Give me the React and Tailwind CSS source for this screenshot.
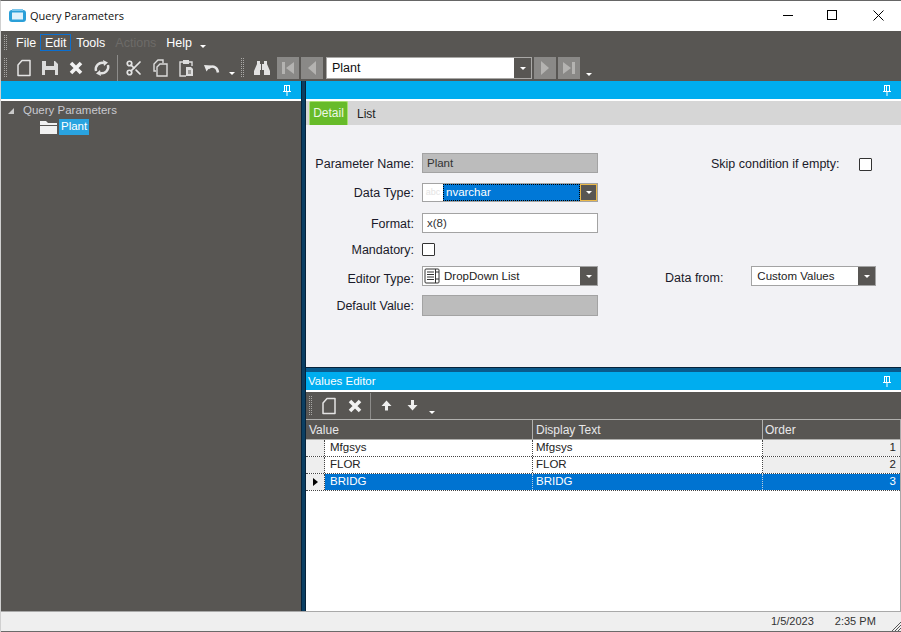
import { Scissors } from "lucide-react";

const Caret = ({ className = "" }) => (
    <span className={`block w-0 h-0 border-x-[3px] border-x-transparent border-t-[3px] border-t-white ${className}`} />
);

const Grip = ({ className = "" }) => (
    <span className={`block w-[3px] border-x border-dotted border-[#a9a8a6] ${className}`} />
);

const Pin = () => (
    <svg width="10" height="11" viewBox="0 0 10 11" className="block">
        <path d="M2 0h6v6H9v1H5.500v4h-1V7H1V6h1zM3 1v5h1V1zM5 1v5h2V1z" fill="#fff" />
    </svg>
);

const Icon = ({ children, w = 18 }) => (
    <svg width={w} height="18" viewBox="0 0 18 18" fill="none" className="block">
        {children}
    </svg>
);

const NewIcon = () => (
    <Icon>
        <path d="M7 1.500h8v15H3V6z" stroke="#e4e4e4" strokeWidth="1.500" strokeLinejoin="round" />
    </Icon>
);

const SaveIcon = () => (
    <Icon>
        <path fillRule="evenodd" d="M1 2h13l3 3v11H1zM5 2v5h8V2zM4 11v5h10v-5z" fill="#dcdcdc" />
    </Icon>
);

const CloseIcon = () => (
    <Icon>
        <path d="M4 4l10 10M14 4L4 14" stroke="#f2f2f2" strokeWidth="3.600" />
    </Icon>
);

const RefreshIcon = () => (
    <Icon>
        <path d="M3 12a6.500 6.500 0 0 1 8-8" stroke="#e2e2e2" strokeWidth="2.400" />
        <path d="M15 6a6.500 6.500 0 0 1-8 8" stroke="#e2e2e2" strokeWidth="2.400" />
        <path d="M10 1l5 2.500-4 3.500zM8 17l-5-2.500 4-3.500z" fill="#e2e2e2" />
    </Icon>
);

const CopyIcon = () => (
    <Icon>
        <path d="M5 12H3V5l4-4h5v3" stroke="#dcdcdc" strokeWidth="1.400" />
        <path d="M9 5h7v12H6V8z" stroke="#dcdcdc" strokeWidth="1.400" />
    </Icon>
);

const PasteIcon = () => (
    <Icon>
        <path d="M6 3H3v14h6M12 3h3v4" stroke="#dcdcdc" strokeWidth="1.400" />
        <path d="M6 1h6v4H6z" fill="#dcdcdc" />
        <path d="M9 8h5l2 2v7H9z" fill="#dcdcdc" />
        <path d="M11 12h3M11 14h3" stroke="#585653" />
    </Icon>
);

const UndoIcon = () => (
    <Icon>
        <path d="M5 9.500c3-3.500 9-2.500 10 4" stroke="#e6e6e6" strokeWidth="2.600" />
        <path d="M1 6l7 0.500-4.500 6z" fill="#e6e6e6" />
    </Icon>
);

const BinocularsIcon = () => (
    <Icon>
        <path d="M4 2h3v3h4V2h3v3l3 7v4h-6v-5H7v5H1v-4l3-7z" fill="#e2e2e2" />
        <path d="M8.500 5v6" stroke="#585653" />
    </Icon>
);

const ArrowUp = ({ down }) => (
    <svg width="11" height="11" viewBox="0 0 11 11" className="block">
        <path d={down ? "M4 0h3v5h3.500L5.500 10.500.5 5H4z" : "M5.500.5L10.500 6H7v4.500H4V6H.5z"} fill="#efefef" />
    </svg>
);

const NavButton = ({ dir, bar, className = "" }) => (
    <span className={`w-[22px] h-[22px] bg-[#8a8987] flex items-center justify-center ${className}`}>
        <svg width="14" height="14" viewBox="0 0 14 14" className="block">
            {dir === "left" ? (
                <path d={bar ? "M1 1h3v12H1zM13 1v12L5 7z" : "M11 0v14L3 7z"} fill="#b4b3b1" />
            ) : (
                <path d={bar ? "M10 1h3v12h-3zM1 1v12l8-6z" : "M3 0v14l8-7z"} fill="#b4b3b1" />
            )}
        </svg>
    </span>
);

const ToolCell = ({ children, className = "w-[26px]" }) => (
    <span className={`flex items-center justify-center shrink-0 ${className}`}>{children}</span>
);

const PaneHeader = ({ title }) => (
    <div className="h-[18px] bg-[#00adef] flex items-center justify-between pl-[2px] pr-[9px] text-white text-[11.500px] shrink-0">
        <span className="pt-[1px]">{title}</span>
        <Pin />
    </div>
);

const Label = ({ children, className = "" }) => (
    <span className={`block w-[108px] shrink-0 text-right text-[12.500px] text-[#1a1a2a] leading-[14px] ${className}`}>{children}</span>
);

const DropButton = ({ className = "" }) => (
    <span className={`w-[17px] self-stretch bg-[#585653] flex items-center justify-center shrink-0 ${className}`}>
        <Caret className="border-x-[3.500px] border-t-[3.500px]" />
    </span>
);

const DocListIcon = () => (
    <svg width="16" height="16" viewBox="0 0 16 16" fill="none" className="block">
        <rect x="1" y="1" width="14" height="14" rx="1" stroke="#333" />
        <path d="M3 4h7M3 6.500h7M3 9h7M3 11.500h7M11.500 1v14M11.500 4H15M11.500 11H15" stroke="#333" />
    </svg>
);

const rows = [
    { value: "Mfgsys", text: "Mfgsys", order: 1 },
    { value: "FLOR", text: "FLOR", order: 2 },
    { value: "BRIDG", text: "BRIDG", order: 3, selected: true },
];

const App = () => {
    return (
        <div className="w-[901px] h-[632px] flex flex-col overflow-hidden bg-[#585653] border-t border-l border-t-[#666] border-l-[#d0d0d0] text-[12px] font-['Liberation_Sans',Arial,sans-serif]">
            {/* title bar */}
            <div className="h-[30px] bg-white flex items-center shrink-0 pl-[8px]">
                <svg width="17" height="14" viewBox="0 0 17 14" className="block">
                    <rect x="0" y="1" width="17" height="12" rx="3" fill="#2a9fd8" />
                    <rect x="3" y="3.500" width="11" height="7" fill="#dff1fb" />
                    <rect x="3" y="0" width="11" height="2" fill="#7cc6ec" />
                </svg>
                <span className="ml-[4px] text-[11px] text-[#111] font-['Open_Sans',sans-serif]">Query Parameters</span>
                <div className="ml-auto flex items-center mb-[2px]">
                    <span className="w-[45px] flex justify-center"><span className="block w-[10px] h-px bg-black" /></span>
                    <span className="w-[45px] flex justify-center pr-[1px]"><span className="block w-[10px] h-[10px] border border-black" /></span>
                    <span className="w-[46px] flex justify-center">
                        <svg width="11" height="11" viewBox="0 0 11 11" className="block"><path d="M.5.5l10 10M10.500.5l-10 10" stroke="#000" /></svg>
                    </span>
                </div>
            </div>

            {/* menu bar */}
            <div className="h-[23px] flex items-center shrink-0 pl-[3px] text-white text-[12.500px]">
                <Grip className="h-[15px]" />
                <span className="ml-[9px] pt-[2px]">File</span>
                <span className="ml-[4px] w-[31px] h-[17px] border border-[#0b6fd0] flex items-center justify-center pt-[2px]">Edit</span>
                <span className="ml-[5px] pt-[2px]">Tools</span>
                <span className="ml-[10px] pt-[2px] text-[#6d6b68]">Actions</span>
                <span className="ml-[10px] pt-[2px]">Help</span>
                <Caret className="ml-[8px] mt-[8px]" />
            </div>

            {/* main toolbar */}
            <div className="h-[27px] flex items-center shrink-0 pl-[3px]">
                <Grip className="h-[19px]" />
                <span className="w-[4px]" />
                <ToolCell><NewIcon /></ToolCell>
                <ToolCell><SaveIcon /></ToolCell>
                <ToolCell><CloseIcon /></ToolCell>
                <ToolCell><RefreshIcon /></ToolCell>
                <span className="ml-[2px] w-px h-[26px] bg-[#8d8c8a]" />
                <ToolCell className="w-[25px] ml-[3px]"><Scissors size={18} color="#e4e4e4" strokeWidth={2.300} /></ToolCell>
                <ToolCell className="w-[27px]"><CopyIcon /></ToolCell>
                <ToolCell><PasteIcon /></ToolCell>
                <ToolCell><UndoIcon /></ToolCell>
                <Caret className="ml-[4px] mt-[12px]" />
                <Grip className="ml-[6px] h-[19px]" />
                <ToolCell className="w-[26px] ml-[5px]"><BinocularsIcon /></ToolCell>
                <NavButton dir="left" bar className="ml-[2px] mt-px" />
                <NavButton dir="left" className="ml-[2px] mt-px" />
                <div className="ml-[3px] mt-px w-[206px] h-[22px] bg-white border border-[#a9a8a6] flex items-center">
                    <span className="flex-1 pl-[5px] text-[12.500px] text-[#111]">Plant</span>
                    <DropButton />
                </div>
                <NavButton dir="right" className="ml-[2px] mt-px" />
                <NavButton dir="right" bar className="ml-[2px] mt-px" />
                <Caret className="ml-[6px] mt-[14px]" />
            </div>

            <div className="flex-1 flex min-h-0">
                {/* tree pane */}
                <div className="w-[300px] shrink-0 flex flex-col">
                    <PaneHeader title="" />
                    <div className="h-[2px] bg-white shrink-0" />
                    <div className="pt-[2px] text-[#c9cad0] text-[11.500px]">
                        <div className="flex items-center h-[16px] pl-[7px]">
                            <span className="block w-0 h-0 border-l-[6px] border-l-transparent border-b-[6px] border-b-[#c9c9c9]" />
                            <span className="ml-[9px]">Query Parameters</span>
                        </div>
                        <div className="flex items-center h-[16px] pl-[39px]">
                            <svg width="17" height="13" viewBox="0 0 17 13" className="block">
                                <path d="M0 0h6l2 2h9v2H0zM0 5h17v8H0z" fill="#f1f1f1" />
                            </svg>
                            <span className="ml-[2px] h-[16px] px-[2px] bg-[#29a3e0] text-white flex items-center">Plant</span>
                        </div>
                    </div>
                </div>

                {/* splitter */}
                <div className="w-[5px] shrink-0 bg-[#0b3f63] border-x border-[#07233a]" />

                <div className="flex-1 flex flex-col min-w-0 bg-white">
                    <PaneHeader title="" />
                    <div className="h-[2px] bg-white shrink-0" />

                    {/* tabs */}
                    <div className="h-[24px] bg-[#d6d6d6] flex items-end shrink-0 pl-[3px]">
                        <span className="w-[39px] h-[24px] bg-[#67bb29] border border-b-0 border-[#a6e06e] rounded-t-[2px] text-[#eef7e4] flex items-center justify-center pb-[1px]">Detail</span>
                        <span className="ml-[9px] h-[22px] text-[#222] flex items-center">List</span>
                    </div>

                    {/* detail form */}
                    <div className="h-[242px] bg-[#f2f2f5] shrink-0 pt-[28px] text-[#1a1a2a]">
                        <div className="h-[30px] flex items-start">
                            <Label className="mt-[4px]">Parameter Name:</Label>
                            <div className="ml-[8px] w-[176px] h-[20px] bg-[#bcbcbc] border border-[#a3a3a3] flex items-center pl-[4px] pt-[1px] text-[#333] text-[11.500px]">Plant</div>
                            <span className="ml-[113px] mt-[4px] text-[12.500px] leading-[14px] text-[#1a1a2a]">Skip condition if empty:</span>
                            <span className="ml-[19px] mt-[5px] w-[13px] h-[13px] bg-white border border-[#333] rounded-[1px]" />
                        </div>
                        <div className="h-[30px] flex items-start">
                            <Label className="mt-[3px]">Data Type:</Label>
                            <div className="ml-[8px] w-[176px] h-[19px] bg-white border border-[#a3a3a3] flex items-stretch">
                                <span className="w-[20px] text-[#e4e4e4] text-[9px] flex items-center justify-center">abc</span>
                                <span className="flex-1 bg-[#0078d7] border border-dotted border-black text-white flex items-center pl-[2px] text-[11.500px]">nvarchar</span>
                                <DropButton className="w-[16px] border border-[#eab84a]" />
                            </div>
                        </div>
                        <div className="h-[30px] flex items-start">
                            <Label className="mt-[4px]">Format:</Label>
                            <div className="ml-[8px] w-[176px] h-[20px] bg-white border border-[#a3a3a3] flex items-center pl-[4px] pt-[1px] text-[#333] text-[11.500px]">x(8)</div>
                        </div>
                        <div className="h-[23px] flex items-start">
                            <Label>Mandatory:</Label>
                            <span className="ml-[8px] w-[13px] h-[13px] bg-white border border-[#333] rounded-[1px]" />
                        </div>
                        <div className="h-[29px] flex items-start">
                            <Label className="mt-[6px]">Editor Type:</Label>
                            <div className="ml-[8px] w-[176px] h-[20px] bg-white border border-[#a3a3a3] flex items-center pl-[1px] text-[#222] text-[11.500px]">
                                <DocListIcon />
                                <span className="ml-[4px] flex-1 pt-[1px]">DropDown List</span>
                                <DropButton />
                            </div>
                            <span className="ml-[67px] mt-[5px] text-[12.500px] leading-[14px]">Data from:</span>
                            <div className="ml-[28px] w-[125px] h-[20px] bg-white border border-[#a3a3a3] flex items-center pl-[5px] text-[#222] text-[11.500px]">
                                <span className="flex-1 pt-[1px]">Custom Values</span>
                                <DropButton />
                            </div>
                        </div>
                        <div className="flex items-start">
                            <Label className="mt-[4px]">Default Value:</Label>
                            <div className="ml-[8px] w-[176px] h-[21px] bg-[#bcbcbc] border border-[#a3a3a3]" />
                        </div>
                    </div>

                    <div className="h-[5px] shrink-0 bg-[#0a5a8c] border-t border-[#07233a]" />

                    <PaneHeader title="Values Editor" />
                    <div className="h-[2px] bg-white shrink-0" />

                    {/* values toolbar */}
                    <div className="h-[27px] bg-[#585653] flex items-center shrink-0 pl-[3px]">
                        <Grip className="h-[19px]" />
                        <span className="w-[4px]" />
                        <ToolCell><NewIcon /></ToolCell>
                        <ToolCell><CloseIcon /></ToolCell>
                        <span className="ml-[2px] w-px h-[26px] bg-[#8d8c8a]" />
                        <ToolCell className="w-[26px] ml-[2px]"><ArrowUp /></ToolCell>
                        <ToolCell className="w-[26px]"><ArrowUp down /></ToolCell>
                        <Caret className="ml-[4px] mt-[13px]" />
                    </div>

                    {/* values grid */}
                    <div className="flex-1 bg-white min-h-0 border-r border-[#a9a9a9]">
                        <div className="h-[21px] bg-[#585653] flex items-center text-[#e8e8ea] border-y border-[#b0b0ae]">
                            <span className="w-[227px] pl-[3px] h-full flex items-center border-r border-[#b0b0ae]">Value</span>
                            <span className="w-[230px] pl-[3px] h-full flex items-center border-r border-[#b0b0ae]">Display Text</span>
                            <span className="flex-1 pl-[2px] flex items-center">Order</span>
                        </div>
                        {rows.map((row) => (
                            <div
                                key={row.value}
                                className="h-[17px] flex text-[11.500px] border-b border-dotted border-[#444]"
                            >
                                <span className="w-[19px] bg-[#eeeeee] flex items-center justify-center border-r border-dotted border-[#444] shrink-0">
                                    {row.selected && <span className="block w-0 h-0 border-y-[4.500px] border-y-transparent border-l-[5px] border-l-black" />}
                                </span>
                                <span className={`w-[208px] pl-[5px] flex items-center border-r border-dotted ${row.selected ? "bg-[#0073d1] text-white border-[#bcd]" : "text-[#222] border-[#444]"}`}>{row.value}</span>
                                <span className={`w-[230px] pl-[3px] flex items-center border-r border-dotted ${row.selected ? "bg-[#0073d1] text-white border-[#bcd]" : "text-[#222] border-[#444]"}`}>{row.text}</span>
                                <span className={`flex-1 pr-[4px] flex items-center justify-end ${row.selected ? "bg-[#0073d1] text-white" : "bg-[#eeeeee] text-[#222]"}`}>{row.order}</span>
                            </div>
                        ))}
                    </div>
                </div>
            </div>

            {/* status bar */}
            <div className="h-[21px] shrink-0 bg-[#efefef] border-t border-b border-t-[#a9a9a9] border-b-[#6a6a6a] flex items-center text-[#333] text-[11px]">
                <span className="ml-[770px]">1/5/2023</span>
                <span className="ml-[21px]">2:35 PM</span>
                <svg width="10" height="10" viewBox="0 0 10 10" className="ml-auto self-end block">
                    <path d="M10 1L1 10M10 4l-6 6M10 7l-3 3" stroke="#555" />
                </svg>
            </div>
        </div>
    );
};

export default App;
